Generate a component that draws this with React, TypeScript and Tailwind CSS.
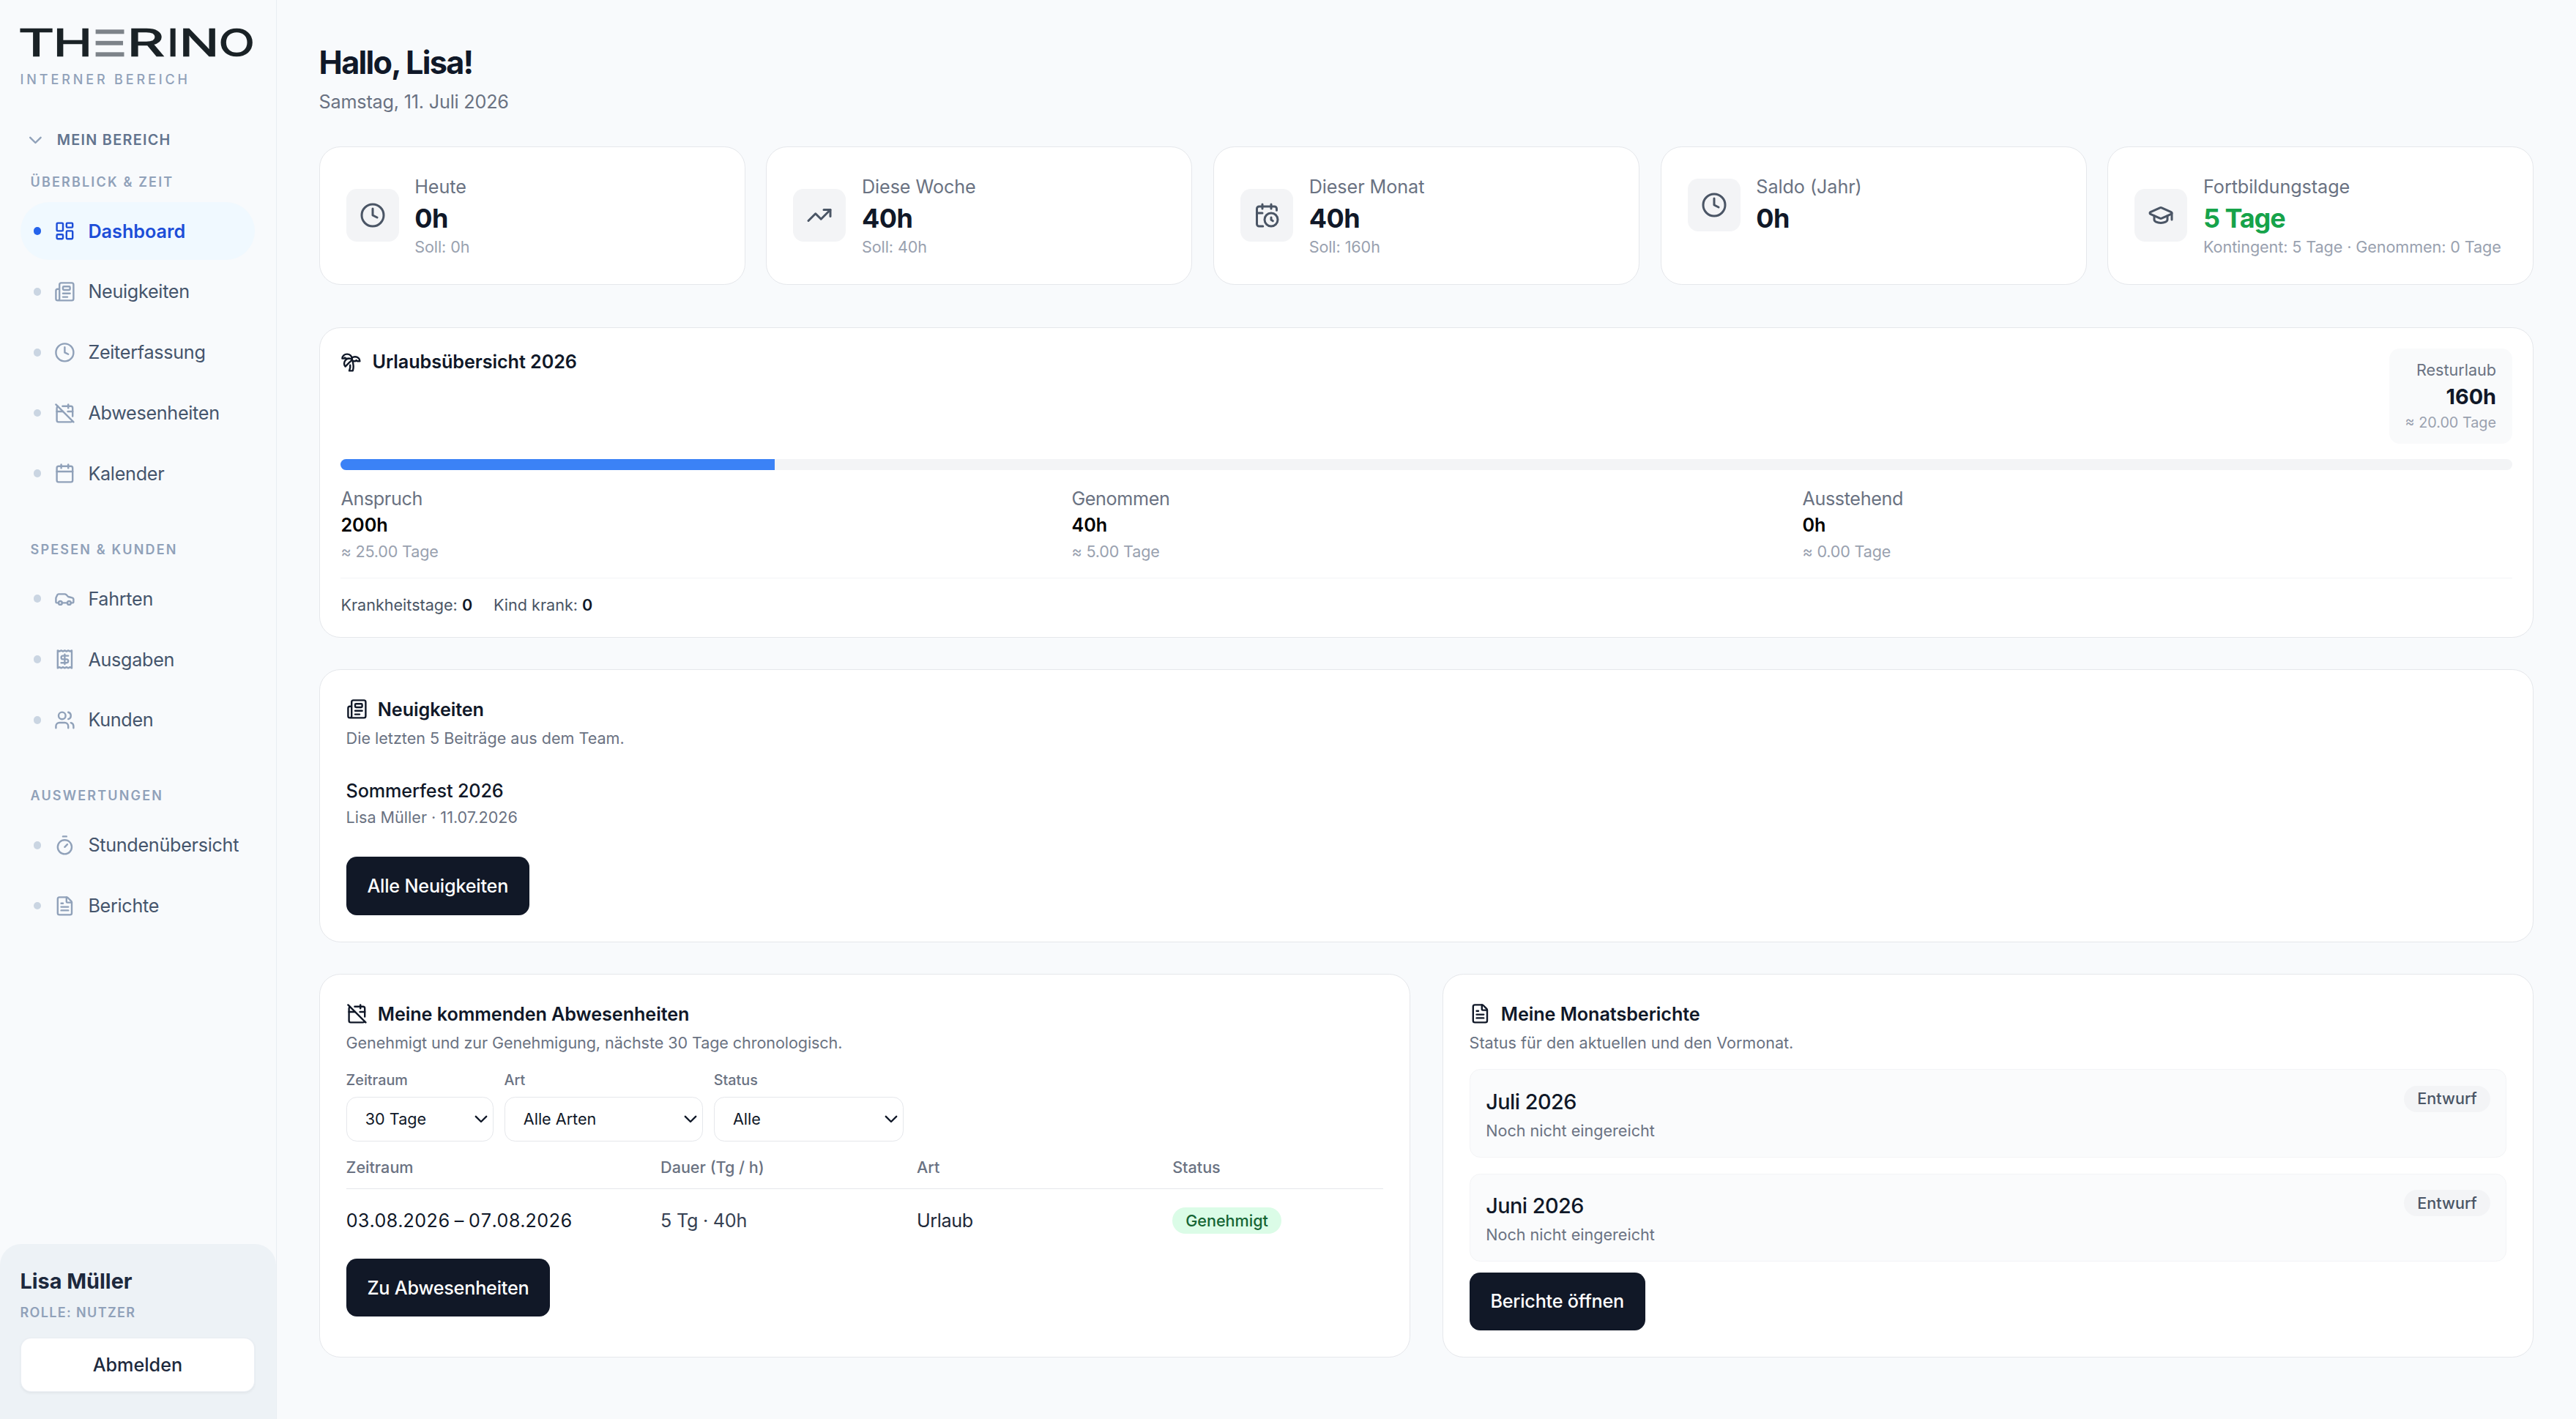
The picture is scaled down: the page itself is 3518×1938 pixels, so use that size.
import type { ReactNode } from 'react';
import {
  Calendar,
  CalendarClock,
  CalendarOff,
  Car,
  ChevronDown,
  Clock,
  FileText,
  GraduationCap,
  LayoutDashboard,
  Newspaper,
  Receipt,
  Timer,
  TreePalm,
  TrendingUp,
  Users,
} from 'lucide-react';
import type { LucideIcon } from 'lucide-react';
import { clsx } from 'clsx';

type NavItem = { label: string; icon: LucideIcon; active?: boolean };

const navGroups: { title: string; items: NavItem[] }[] = [
  {
    title: 'Überblick & Zeit',
    items: [
      { label: 'Dashboard', icon: LayoutDashboard, active: true },
      { label: 'Neuigkeiten', icon: Newspaper },
      { label: 'Zeiterfassung', icon: Clock },
      { label: 'Abwesenheiten', icon: CalendarOff },
      { label: 'Kalender', icon: Calendar },
    ],
  },
  {
    title: 'Spesen & Kunden',
    items: [
      { label: 'Fahrten', icon: Car },
      { label: 'Ausgaben', icon: Receipt },
      { label: 'Kunden', icon: Users },
    ],
  },
  {
    title: 'Auswertungen',
    items: [
      { label: 'Stundenübersicht', icon: Timer },
      { label: 'Berichte', icon: FileText },
    ],
  },
];

const stats: { label: string; value: string; sub?: string; icon: LucideIcon; green?: boolean }[] = [
  { label: 'Heute', value: '0h', sub: 'Soll: 0h', icon: Clock },
  { label: 'Diese Woche', value: '40h', sub: 'Soll: 40h', icon: TrendingUp },
  { label: 'Dieser Monat', value: '40h', sub: 'Soll: 160h', icon: CalendarClock },
  { label: 'Saldo (Jahr)', value: '0h', icon: Clock },
  {
    label: 'Fortbildungstage',
    value: '5 Tage',
    sub: 'Kontingent: 5 Tage · Genommen: 0 Tage',
    icon: GraduationCap,
    green: true,
  },
];

const vacation = [
  { label: 'Anspruch', value: '200h', days: '≈ 25.00 Tage' },
  { label: 'Genommen', value: '40h', days: '≈ 5.00 Tage' },
  { label: 'Ausstehend', value: '0h', days: '≈ 0.00 Tage' },
];

const reports = ['Juli 2026', 'Juni 2026'];

// The E is drawn as three bars, the other letters are stretched text
const logoLetters = [
  { char: 'T', x: -1.5, width: 27 },
  { char: 'H', x: 24.85, width: 29.6 },
  { char: 'R', x: 80.8, width: 28.1 },
  { char: 'I', x: 111.2, width: 8.8 },
  { char: 'N', x: 120.5, width: 30 },
  { char: 'O', x: 150.5, width: 26.9 },
];

function Logo() {
  return (
    <svg viewBox="0 0 176 21" className="block h-[21px] w-[176px] overflow-visible">
      <g fill="#1a2226" stroke="#1a2226" strokeWidth="1.3" fontFamily="Inter, sans-serif" fontSize="27" fontWeight="300">
        {logoLetters.map((l) => (
          <text key={l.char} x={l.x} y="20.2" textLength={l.width} lengthAdjust="spacingAndGlyphs">
            {l.char}
          </text>
        ))}
      </g>
      <g fill="#7d8389">
        <rect x="57" y="0.2" width="21.6" height="3.3" />
        <rect x="57" y="8.8" width="20.8" height="3.3" />
        <rect x="57" y="17.4" width="21.6" height="3.3" />
      </g>
    </svg>
  );
}

function Card({ className, children }: { className?: string; children: ReactNode }) {
  return <div className={clsx('rounded-2xl border border-gray-200 bg-white', className)}>{children}</div>;
}

function CardTitle({ icon: Icon, children }: { icon: LucideIcon; children: ReactNode }) {
  return (
    <h2 className="flex items-center gap-2 text-sm font-semibold tracking-[-0.003em] text-gray-900">
      <Icon className="h-4 w-4" />
      {children}
    </h2>
  );
}

function DarkButton({ className, children }: { className?: string; children: ReactNode }) {
  return (
    <button
      className={clsx(
        'flex h-11 w-fit items-center rounded-lg bg-[#111827] px-4 text-sm font-medium tracking-[-0.008em] text-white',
        className
      )}
    >
      {children}
    </button>
  );
}

function FilterSelect({ label, value, className }: { label: string; value: string; className: string }) {
  return (
    <div className="flex flex-col gap-1">
      <span className="text-[11px] font-medium leading-[16.5px] text-gray-500">{label}</span>
      <button
        className={clsx(
          'flex h-[33.5px] items-center justify-between rounded-lg border border-gray-200 bg-white pl-[14px] pr-1 text-xs text-gray-900',
          className
        )}
      >
        {value}
        <svg viewBox="0 0 10 6" className="h-[6px] w-[10px]" fill="none" stroke="currentColor" strokeWidth="1.3" strokeLinecap="round" strokeLinejoin="round">
          <path d="M1 1l4 4 4-4" />
        </svg>
      </button>
    </div>
  );
}

function Sidebar() {
  return (
    <aside className="flex w-[210px] shrink-0 flex-col border-r border-slate-200/70">
      <div className="pl-[15.3px] pt-[22.3px]">
        <Logo />
        <div className="mt-[9.6px] text-[10px] font-medium uppercase leading-[15px] tracking-[0.215em] text-slate-400">
          Interner Bereich
        </div>
      </div>

      <nav className="flex flex-1 flex-col pl-[15.3px] pr-4 pt-[30.2px]">
        <div className="flex items-center gap-2 pl-[3.5px] text-[11px] font-semibold uppercase leading-4 tracking-[0.065em] text-slate-500">
          <ChevronDown className="h-4 w-4 text-slate-400" />
          <span className="pl-[0.4px]">Mein Bereich</span>
        </div>
        <div className="mt-[16.3px] flex flex-col gap-7">
          {navGroups.map((group) => (
            <div key={group.title}>
              <div className="mb-2 pl-[7.8px] text-[10px] font-semibold uppercase leading-[15px] tracking-[0.12em] text-slate-400">
                {group.title}
              </div>
              <div className="flex flex-col gap-0.5">
                {group.items.map(({ label, icon: Icon, active }) => (
                  <a
                    key={label}
                    className={clsx(
                      'flex h-11 items-center gap-2.5 whitespace-nowrap rounded-full px-2.5 text-sm',
                      active ? 'bg-sky-50 font-semibold text-[#1d4ed8]' : 'tracking-[-0.012em] text-slate-600'
                    )}
                  >
                    <span className={clsx('h-1.5 w-1.5 shrink-0 rounded-full', active ? 'bg-[#2563eb]' : 'bg-slate-300')} />
                    <Icon className={clsx('h-4 w-4 shrink-0', !active && 'text-slate-400')} />
                    <span className="-ml-[0.4px]">{label}</span>
                  </a>
                ))}
              </div>
            </div>
          ))}
        </div>
      </nav>

      <div className="h-[132.8px] rounded-t-2xl bg-[#edf2f6] pl-[15.3px] pr-4 pt-[16.4px]">
        <div className="text-base font-bold text-slate-800">Lisa Müller</div>
        <div className="mt-[4px] text-[10px] font-semibold uppercase leading-[15px] tracking-[0.075em] text-slate-400">
          Rolle: Nutzer
        </div>
        <button className="mt-3 flex h-[41px] w-full items-center justify-center rounded-lg border border-slate-200/70 bg-white text-sm font-medium text-slate-800 shadow-xs">
          Abmelden
        </button>
      </div>
    </aside>
  );
}

export default function App() {
  return (
    <div className="flex h-[1076.67px] overflow-hidden bg-slate-50 font-['Inter',sans-serif] text-black [zoom:1.8]">
      <Sidebar />

      <main className="min-w-0 flex-1 px-8 pt-[31.6px]">
        <h1 className="text-2xl font-bold tracking-[-0.04em] text-gray-900">Hallo, Lisa!</h1>
        <p className="mt-[3.4px] text-sm tracking-[-0.008em] text-gray-500">Samstag, 11. Juli 2026</p>

        <div className="mt-6 grid grid-cols-5 gap-4">
          {stats.map(({ label, value, sub, icon: Icon, green }) => (
            <Card key={label} className="p-5">
              <div className="flex items-center gap-3">
                <div className="flex h-10 w-10 shrink-0 items-center justify-center rounded-lg bg-gray-100 text-gray-600">
                  <Icon className="h-5 w-5" />
                </div>
                <div className="whitespace-nowrap">
                  <div className="text-sm tracking-[-0.003em] text-gray-500">{label}</div>
                  <div className={clsx('text-xl font-bold', green ? 'tracking-[-0.03em] text-[#16a34a]' : 'tracking-[-0.015em] text-gray-900')}>
                    {value}
                  </div>
                  {sub && <div className="text-xs tracking-[-0.004em] text-gray-400">{sub}</div>}
                </div>
              </div>
            </Card>
          ))}
        </div>

        <Card className="mt-8 p-4">
          <div className="flex items-start justify-between">
            <CardTitle icon={TreePalm}>Urlaubsübersicht 2026</CardTitle>
            <div className="rounded-lg bg-gray-50 px-3 py-2 text-right">
              <div className="text-xs text-gray-500">Resturlaub</div>
              <div className="text-base font-bold text-gray-900">160h</div>
              <div className="text-[11px] leading-4 text-gray-400">≈ 20.00 Tage</div>
            </div>
          </div>
          <div className="mt-3 h-2 overflow-hidden rounded-full bg-gray-100">
            <div className="h-full w-1/5 bg-[#3b82f6]" />
          </div>
          <div className="mt-3 grid grid-cols-3 gap-4">
            {vacation.map((v) => (
              <div key={v.label} className="text-sm">
                <div className="tracking-[-0.015em] text-gray-500">{v.label}</div>
                <div className="font-semibold">{v.value}</div>
                <div className="mt-0.5 text-xs tracking-[-0.008em] text-gray-400">{v.days}</div>
              </div>
            ))}
          </div>
          <div className="mt-3 flex gap-4 border-t border-gray-100 pt-3 text-xs text-gray-600">
            <span>
              Krankheitstage: <strong className="font-semibold text-gray-900">0</strong>
            </span>
            <span>
              Kind krank: <strong className="font-semibold text-gray-900">0</strong>
            </span>
          </div>
        </Card>

        <Card className="mt-6 p-5">
          <CardTitle icon={Newspaper}>Neuigkeiten</CardTitle>
          <p className="mt-1 text-xs text-gray-500">Die letzten 5 Beiträge aus dem Team.</p>
          <div className="mt-3 py-2.5">
            <div className="text-sm font-medium tracking-[-0.005em] text-gray-900">Sommerfest 2026</div>
            <div className="mt-0.5 text-xs text-gray-500">Lisa Müller · 11.07.2026</div>
          </div>
          <DarkButton className="mt-3">Alle Neuigkeiten</DarkButton>
        </Card>

        <div className="mt-6 grid grid-cols-2 gap-6">
          <Card className="p-5">
            <CardTitle icon={CalendarOff}>Meine kommenden Abwesenheiten</CardTitle>
            <p className="mt-1 text-xs tracking-[-0.004em] text-gray-500">
              Genehmigt und zur Genehmigung, nächste 30 Tage chronologisch.
            </p>
            <div className="mt-[12.6px] flex gap-2">
              <FilterSelect label="Zeitraum" value="30 Tage" className="w-[112px]" />
              <FilterSelect label="Art" value="Alle Arten" className="w-[151px]" />
              <FilterSelect label="Status" value="Alle" className="w-36" />
            </div>
            <div className="mt-3 grid grid-cols-[238.6px_194.4px_194px_1fr] border-b border-gray-200 pb-2 text-xs font-medium text-gray-500">
              <span>Zeitraum</span>
              <span>Dauer (Tg / h)</span>
              <span>Art</span>
              <span>Status</span>
            </div>
            <div className="grid grid-cols-[238.6px_194.4px_194px_1fr] items-center pt-3.5 text-sm">
              <span className="tabular-nums tracking-[-0.01em] text-gray-900">03.08.2026 – 07.08.2026</span>
              <span className="tracking-[-0.01em] text-gray-700">5 Tg · 40h</span>
              <span className="tracking-[-0.015em] text-gray-800">Urlaub</span>
              <span className="w-fit rounded-full bg-green-100 px-2.5 py-0.5 text-xs font-medium text-[#166534]">Genehmigt</span>
            </div>
            <DarkButton className="mt-[18.6px]">Zu Abwesenheiten</DarkButton>
          </Card>

          <Card className="p-5">
            <CardTitle icon={FileText}>Meine Monatsberichte</CardTitle>
            <p className="mt-1 text-xs text-gray-500">Status für den aktuellen und den Vormonat.</p>
            <div className="mt-3 flex flex-col gap-3">
              {reports.map((month) => (
                <div key={month} className="flex items-start justify-between rounded-lg border border-gray-100 bg-[#fafbfc] p-3">
                  <div>
                    <div className="text-base font-medium tracking-[-0.018em] text-gray-900">{month}</div>
                    <div className="mt-0.5 text-xs text-gray-500">Noch nicht eingereicht</div>
                  </div>
                  <span className="rounded-full bg-gray-100 px-2.5 py-0.5 text-xs font-medium text-gray-600">Entwurf</span>
                </div>
              ))}
            </div>
            <DarkButton className="mt-2">Berichte öffnen</DarkButton>
          </Card>
        </div>
      </main>
    </div>
  );
}
